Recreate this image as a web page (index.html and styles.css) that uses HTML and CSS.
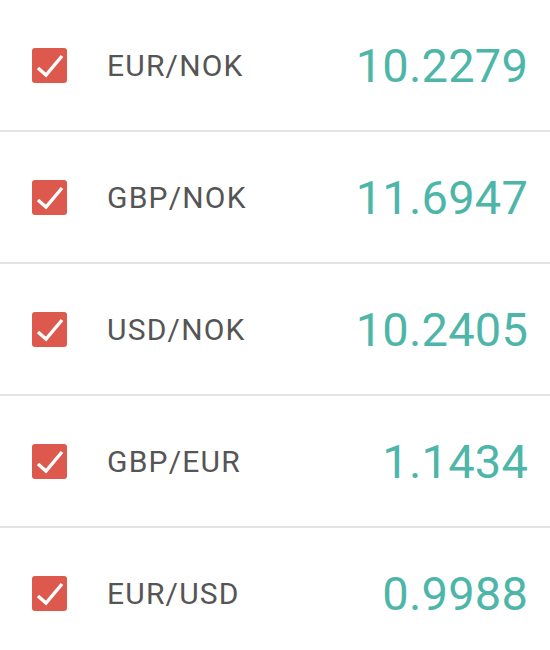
FILE: index.html
```html
<!DOCTYPE html>
<html lang="en">
<head>
<meta charset="UTF-8"/>
<title>Currency pairs</title>
<link rel="stylesheet" href="styles.css">
</head>
<body>
<ul class="pairs">
  <li class="pair">
    <span class="check"><svg viewBox="0 0 35 35"><path d="M6 20 L14 27 L30 8"/></svg></span>
    <span class="name">EUR/NOK</span>
    <span class="rate">10.2279</span>
  </li>
  <li class="pair">
    <span class="check"><svg viewBox="0 0 35 35"><path d="M6 20 L14 27 L30 8"/></svg></span>
    <span class="name">GBP/NOK</span>
    <span class="rate">11.6947</span>
  </li>
  <li class="pair">
    <span class="check"><svg viewBox="0 0 35 35"><path d="M6 20 L14 27 L30 8"/></svg></span>
    <span class="name">USD/NOK</span>
    <span class="rate">10.2405</span>
  </li>
  <li class="pair">
    <span class="check"><svg viewBox="0 0 35 35"><path d="M6 20 L14 27 L30 8"/></svg></span>
    <span class="name">GBP/EUR</span>
    <span class="rate">1.1434</span>
  </li>
  <li class="pair">
    <span class="check"><svg viewBox="0 0 35 35"><path d="M6 20 L14 27 L30 8"/></svg></span>
    <span class="name">EUR/USD</span>
    <span class="rate">0.9988</span>
  </li>
</ul>
</body>
</html>
```

FILE: styles.css
```css
* {
  box-sizing: border-box;
}
body, html {
  margin: 0;
  padding: 0;
  background: #fff;
  font-family: Roboto, "Noto Sans", sans-serif;
}
.pairs {
  list-style: none;
  margin: 0;
  padding: 0;
}
.pair {
  height: 132px;
  display: flex;
  align-items: center;
  padding: 0 22px 0 32px;
  border-bottom: 2px solid #e3e3e3;
}
.check {
  width: 35px;
  height: 35px;
  border-radius: 3px;
  background: #dd584d;
  flex: none;
  display: flex;
}
.check svg {
  width: 35px;
  height: 35px;
}
.check path {
  fill: none;
  stroke: #fff;
  stroke-width: 3.4;
}
.name {
  margin-left: 40px;
  font-size: 30px;
  letter-spacing: 1.2px;
  color: #555;
  flex: 1;
}
.rate {
  font-size: 47px;
  letter-spacing: 0.2px;
  color: #4db6a9;
}
```
